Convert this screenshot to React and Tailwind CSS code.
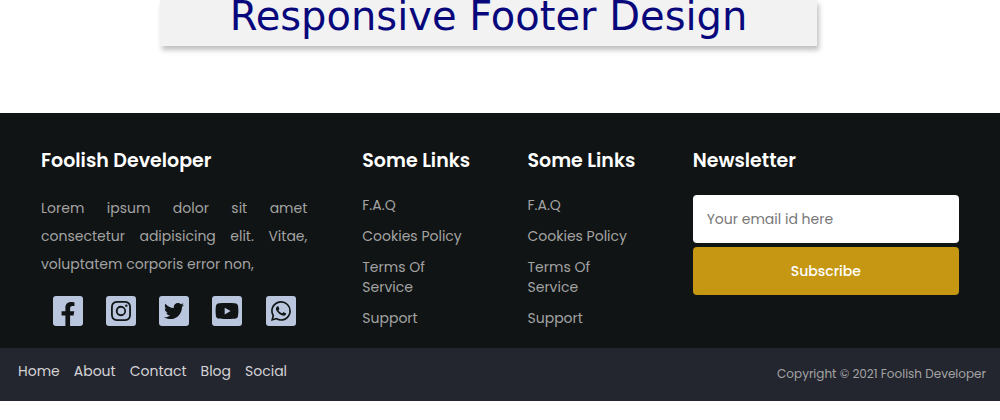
import React from "react";
import { FaFacebookF, FaTwitter, FaYoutube } from "react-icons/fa";
import { BsInstagram, BsWhatsapp } from "react-icons/bs";

const links = ["F.A.Q", "Cookies Policy", "Terms Of Service", "Support"];
const menu = ["Home", "About", "Contact", "Blog", "Social"];
const social = [
  { name: "Facebook", Icon: FaFacebookF, box: "items-end", size: "size-6" },
  { name: "Instagram", Icon: BsInstagram, box: "items-center", size: "size-5" },
  { name: "Twitter", Icon: FaTwitter, box: "items-center", size: "size-5" },
  { name: "YouTube", Icon: FaYoutube, box: "items-center", size: "size-6" },
  { name: "WhatsApp", Icon: BsWhatsapp, box: "items-center", size: "size-5" },
];

function Heading({ children }) {
  return <h2 className="text-[19px] leading-7 font-semibold whitespace-nowrap text-white">{children}</h2>;
}

function LinkColumn() {
  return (
    <nav aria-label="Some Links">
      <Heading>Some Links</Heading>
      <ul className="mt-5 flex flex-col gap-[11px] text-sm leading-5 text-[#a3a3a3]">
        {links.map((text) => (
          <li key={text}>
            <a href="#" className="block">{text}</a>
          </li>
        ))}
      </ul>
    </nav>
  );
}

export default function App() {
  return (
    <div className="bg-white font-['Poppins','Inter',sans-serif]">
      <header className="ml-[16%] w-[65.7%] bg-[#f2f2f2] pb-3.5 text-center shadow-[2px_4px_5px_rgba(0,0,0,0.25)]">
        <h1 className="font-['Verdana','DejaVu_Sans',sans-serif] text-[40px] leading-8 whitespace-nowrap text-[#08087c]">
          Responsive Footer Design
        </h1>
      </header>

      <footer className="mt-[67px]">
        <div className="grid grid-cols-[29fr_12fr_12fr_29fr] gap-[55px] bg-[#101414] px-[41px] pt-[34px] pb-5">
          <section>
            <Heading>Foolish Developer</Heading>
            <p className="mt-[19px] text-justify text-sm leading-7 text-[#a3a3a3]">
              Lorem ipsum dolor sit amet consectetur adipisicing elit. Vitae, voluptatem corporis error non,
            </p>
            <ul className="mt-[18px] flex justify-around">
              {social.map(({ name, Icon, box, size }) => (
                <li key={name}>
                  <a
                    href="#"
                    aria-label={name}
                    className={`flex size-[30px] justify-center overflow-hidden rounded-[3px] bg-[#b9c6de] text-[#101414] ${box}`}
                  >
                    <Icon className={size} />
                  </a>
                </li>
              ))}
            </ul>
          </section>
          <LinkColumn />
          <LinkColumn />
          <section>
            <Heading>Newsletter</Heading>
            <form className="mt-5 flex flex-col gap-1" onSubmit={(e) => e.preventDefault()}>
              <input
                type="email"
                aria-label="Your email id here"
                placeholder="Your email id here"
                className="h-12 w-full rounded-[4px] bg-white px-3.5 text-sm text-[#222222] placeholder:text-[#777777]"
              />
              <button type="submit" className="h-12 rounded-[4px] bg-[#c59713] text-sm font-medium text-white">
                Subscribe
              </button>
            </form>
          </section>
        </div>
        <div className="flex items-center justify-between bg-[#24262f] pt-3 pr-3.5 pb-[13px] pl-[18px]">
          <ul className="flex gap-3.5 pb-1.5 text-sm leading-5 text-[#d3d3d6]">
            {menu.map((text) => (
              <li key={text}>
                <a href="#">{text}</a>
              </li>
            ))}
          </ul>
          <p className="text-xs leading-7 text-[#a3a3a3]">Copyright © 2021 Foolish Developer</p>
        </div>
      </footer>
    </div>
  );
}
